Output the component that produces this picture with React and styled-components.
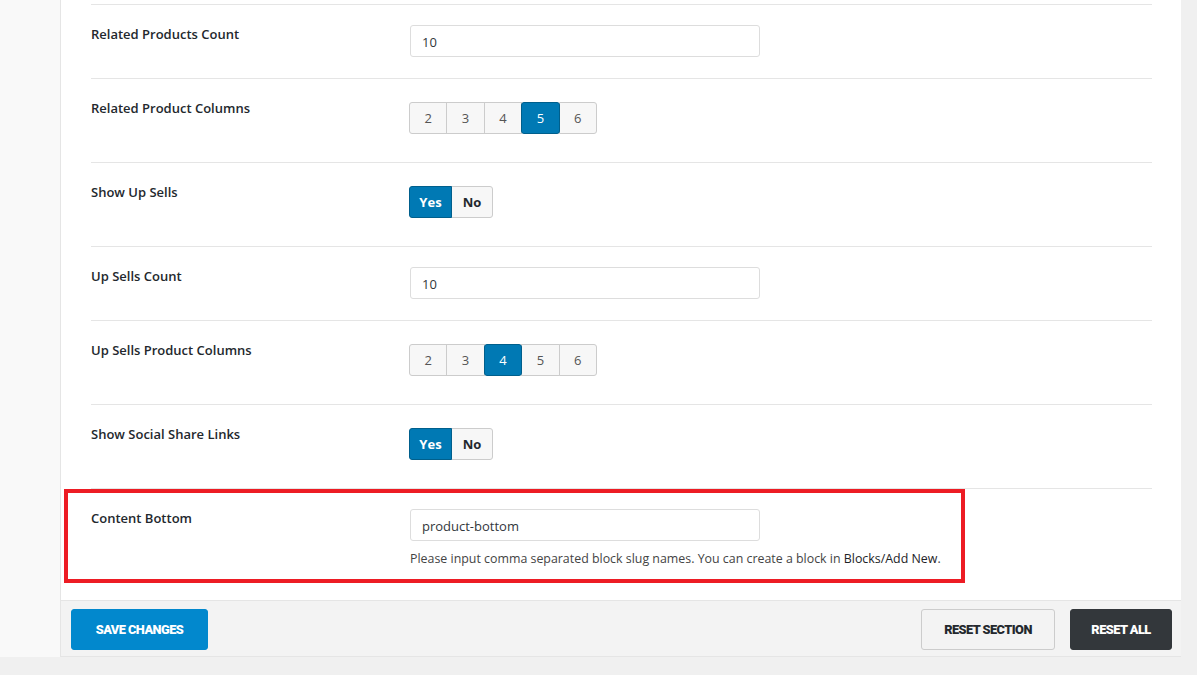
import React from 'react';
import styled, { createGlobalStyle, css } from 'styled-components';

const GlobalStyle = createGlobalStyle`
  html, body { margin: 0; padding: 0; }
  body {
    background: #f0f0f0;
    font-family: "Open Sans", "Noto Sans", sans-serif;
    color: #23282d;
    overflow: hidden;
  }
`;

const Page = styled.div`
  width: 1197px;
  height: 675px;
  display: flex;
  flex-direction: column;
  background: #f0f0f0;
`;

const Top = styled.div`
  display: flex;
  height: 657px;
`;

const LeftGutter = styled.div`
  width: 60px;
  background: #f9f9f9;
  border-right: 1px solid #e5e5e5;
`;

const RightGutter = styled.div`
  width: 16px;
  background: #f0f0f0;
`;

const Main = styled.div`
  flex: 1;
  display: flex;
  flex-direction: column;
  background: #fff;
`;

const Panel = styled.div`
  flex: 1;
  padding: 4px 29px 0 30px;
`;

const Row = styled.div`
  position: relative;
  display: flex;
  border-top: 1px solid #e5e5e5;
  padding: ${(p) => p.$pad || '20px 0 21px'};
`;

const Label = styled.div`
  width: 319px;
  flex-shrink: 0;
  font-size: 13px;
  font-weight: 600;
  line-height: 20px;
  margin-top: -1px;
  color: #23282d;
`;

const Field = styled.div`
  display: flex;
  flex-direction: column;
`;

const TextInput = styled.input`
  box-sizing: border-box;
  width: 350px;
  height: 32px;
  padding: 1px 11px 0;
  border: 1px solid #ddd;
  border-radius: 3px;
  font-family: inherit;
  font-size: 13px;
  color: #32373c;
  background: #fff;
  outline: none;
`;

const Group = styled.div`
  display: flex;
  margin: 3px 0 7px -1px;
`;

const SegButton = styled.button`
  box-sizing: border-box;
  height: 32px;
  width: ${(p) => p.$w || 38.4}px;
  margin-left: -1px;
  border: 1px solid #ccc;
  background: #f7f7f7;
  color: #555;
  font-family: inherit;
  font-size: 13px;
  font-weight: ${(p) => (p.$bold ? 700 : 400)};
  padding: 0;
  &:first-child { margin-left: 0; border-radius: 3px 0 0 3px; }
  &:last-child { border-radius: 0 3px 3px 0; }
  ${(p) => p.$bold && css`color: #23282d;`}
  ${(p) => p.$active && css`
    position: relative;
    z-index: 1;
    background: #0079b4;
    border-color: #005f8c;
    color: #fff;
    border-radius: 3px;
    &:first-child { border-radius: 3px 0 0 3px; }
  `}
`;

const Help = styled.p`
  margin: 10px 0 0;
  font-size: 12.4px;
  line-height: 16px;
  color: #444;
  white-space: nowrap;
  b { font-weight: 400; color: #1d2327; }
`;

const Highlight = styled.div`
  position: absolute;
  left: -27px;
  top: 0;
  width: 901px;
  height: 94px;
  box-sizing: border-box;
  border: 4px solid #ed1c24;
  pointer-events: none;
`;

const Footer = styled.div`
  display: flex;
  align-items: center;
  gap: 15px;
  height: 57px;
  flex-shrink: 0;
  padding: 2px 9px 0 10px;
  box-sizing: border-box;
  background: #f3f3f3;
  border-top: 1px solid #e5e5e5;
  border-bottom: 1px solid #e5e5e5;
`;

const Spacer = styled.div`
  flex: 1;
`;

const ActionButton = styled.button`
  box-sizing: border-box;
  height: 41px;
  width: ${(p) => p.$w}px;
  border-radius: 3px;
  font-family: "Roboto", "Inter", sans-serif;
  font-size: 12.8px;
  font-weight: 900;
  letter-spacing: -0.55px;
  text-transform: uppercase;
  padding: 0;
  cursor: pointer;
  ${(p) => p.$variant === 'primary' && css`
    background: #0288cd;
    border: 1px solid #0288cd;
    color: #fff;
  `}
  ${(p) => p.$variant === 'outline' && css`
    background: #f3f3f3;
    border: 1px solid #ccc;
    color: #23282d;
  `}
  ${(p) => p.$variant === 'dark' && css`
    background: #33373b;
    border: 1px solid #33373b;
    color: #fff;
  `}
`;

const Segments = ({ values, active }) => (
  <Group>
    {values.map((v) => (
      <SegButton key={v} $active={v === active}>{v}</SegButton>
    ))}
  </Group>
);

const YesNo = () => (
  <Group>
    <SegButton $w={43} $bold $active>Yes</SegButton>
    <SegButton $w={42} $bold>No</SegButton>
  </Group>
);

export default function App() {
  return (
    <Page>
      <GlobalStyle />
      <Top>
        <LeftGutter />
        <Main>
          <Panel>
            <Row>
              <Label>Related Products Count</Label>
              <Field><TextInput defaultValue="10" /></Field>
            </Row>
            <Row>
              <Label>Related Product Columns</Label>
              <Segments values={['2', '3', '4', '5', '6']} active="5" />
            </Row>
            <Row>
              <Label>Show Up Sells</Label>
              <YesNo />
            </Row>
            <Row>
              <Label>Up Sells Count</Label>
              <Field><TextInput defaultValue="10" /></Field>
            </Row>
            <Row>
              <Label>Up Sells Product Columns</Label>
              <Segments values={['2', '3', '4', '5', '6']} active="4" />
            </Row>
            <Row>
              <Label>Show Social Share Links</Label>
              <YesNo />
            </Row>
            <Row $pad="20px 0 0">
              <Label>Content Bottom</Label>
              <Field>
                <TextInput defaultValue="product-bottom" />
                <Help>
                  Please input comma separated block slug names. You can create a block in <b>Blocks/Add New</b>.
                </Help>
              </Field>
              <Highlight />
            </Row>
          </Panel>
          <Footer>
            <ActionButton $variant="primary" $w={137}>Save Changes</ActionButton>
            <Spacer />
            <ActionButton $variant="outline" $w={134}>Reset Section</ActionButton>
            <ActionButton $variant="dark" $w={102}>Reset All</ActionButton>
          </Footer>
        </Main>
        <RightGutter />
      </Top>
    </Page>
  );
}
